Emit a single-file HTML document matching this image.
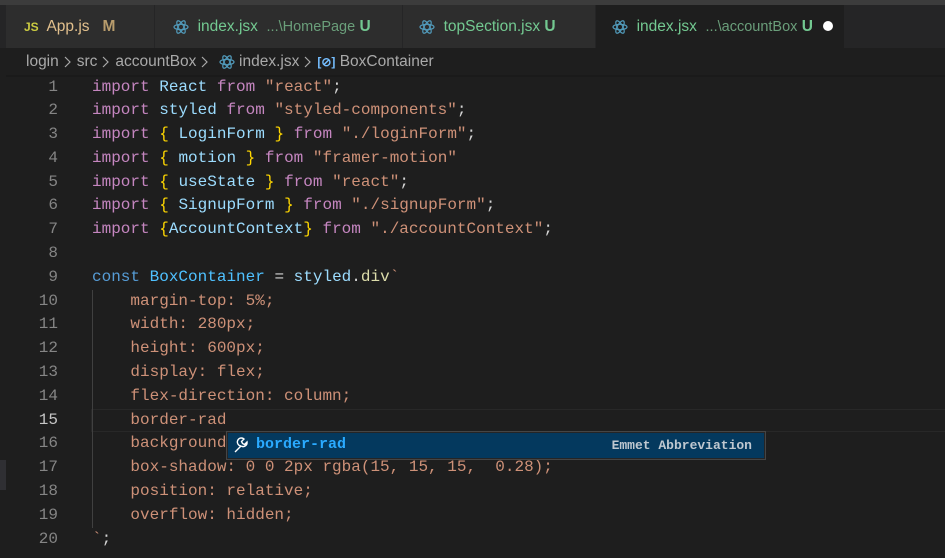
<!DOCTYPE html><html><head><style>
html,body{margin:0;width:945px;height:558px;overflow:hidden}
body{background:#1e1e1e;position:relative;font-family:"Liberation Sans",sans-serif}
.top{position:absolute;left:0;top:0;width:945px;height:5px;background:#3c3c3c}
.bar{position:absolute;left:0;top:5px;width:945px;height:43px;background:#252526}
.tab{position:absolute;top:5px;height:43px;background:#2d2d2d;border-right:1px solid #252526;box-sizing:border-box;font-size:15.5px;line-height:43px;white-space:nowrap;color:#73c991}
.tab .d{color:#6a9e7a;font-size:14.5px}
.crumb{position:absolute;top:48px;left:0;width:945px;height:28px;font-size:15.5px;color:#a9a9a9;line-height:28px;padding-left:26px;box-sizing:border-box;white-space:nowrap}
.code{position:absolute;top:75.5px;left:0;font-family:"Liberation Mono",monospace;font-size:16px;line-height:23.8px;white-space:pre;color:#d4d4d4}
.ln{position:absolute;left:0;top:0;width:58px;text-align:right;color:#858585}
.tx{position:absolute;left:92px;top:0}
.k{color:#c586c0}.v{color:#9cdcfe}.s{color:#ce9178}.b{color:#ffd700}.c{color:#569cd6}.t{color:#4fc1ff}.f{color:#dcdcaa}
svg{vertical-align:middle}
.ch{display:inline-block;margin:0 5px}
</style></head><body>
<div class="top"></div><div class="bar"></div>
<div style="position:absolute;left:0;top:5px;width:6px;height:43px;background:#252526"></div>
<div class="tab" style="left:6px;width:149px;padding-left:18px"><b style="color:#cbcb41;font-size:12px">JS</b>&nbsp; <span style="color:#e2c08d">App.js</span>&nbsp;&nbsp;&nbsp;<b style="color:#b89c6c">M</b></div>
<div class="tab" style="left:155px;width:248px;padding-left:18px"><svg width="16" height="16" viewBox="0 0 16 16"><g fill="none" stroke="#519aba" stroke-width="1.2"><ellipse cx="8" cy="8" rx="7" ry="2.7"/><ellipse cx="8" cy="8" rx="7" ry="2.7" transform="rotate(60 8 8)"/><ellipse cx="8" cy="8" rx="7" ry="2.7" transform="rotate(-60 8 8)"/></g></svg>&nbsp; index.jsx &nbsp;<span class="d">...\HomePage</span> <b>U</b></div>
<div class="tab" style="left:403px;width:193px;padding-left:16px"><svg width="16" height="16" viewBox="0 0 16 16"><g fill="none" stroke="#519aba" stroke-width="1.2"><ellipse cx="8" cy="8" rx="7" ry="2.7"/><ellipse cx="8" cy="8" rx="7" ry="2.7" transform="rotate(60 8 8)"/><ellipse cx="8" cy="8" rx="7" ry="2.7" transform="rotate(-60 8 8)"/></g></svg>&nbsp; topSection.jsx <b>U</b></div>
<div class="tab" style="left:596px;width:249px;background:#1e1e1e;padding-left:16px"><svg width="16" height="16" viewBox="0 0 16 16"><g fill="none" stroke="#519aba" stroke-width="1.2"><ellipse cx="8" cy="8" rx="7" ry="2.7"/><ellipse cx="8" cy="8" rx="7" ry="2.7" transform="rotate(60 8 8)"/><ellipse cx="8" cy="8" rx="7" ry="2.7" transform="rotate(-60 8 8)"/></g></svg>&nbsp; index.jsx &nbsp;<span class="d">...\accountBox</span> <b>U</b><span style="position:absolute;left:227px;top:16px;width:10px;height:10px;border-radius:50%;background:#fff"></span></div>
<div class="crumb">login<svg class="ch" width="8" height="12" viewBox="0 0 8 12"><path d="M1 1 L6 6 L1 11" fill="none" stroke="#a9a9a9" stroke-width="1.2"/></svg>src<svg class="ch" width="8" height="12" viewBox="0 0 8 12"><path d="M1 1 L6 6 L1 11" fill="none" stroke="#a9a9a9" stroke-width="1.2"/></svg>accountBox<svg class="ch" width="8" height="12" viewBox="0 0 8 12"><path d="M1 1 L6 6 L1 11" fill="none" stroke="#a9a9a9" stroke-width="1.2"/></svg> <svg width="16" height="16" viewBox="0 0 16 16"><g fill="none" stroke="#519aba" stroke-width="1.2"><ellipse cx="8" cy="8" rx="7" ry="2.7"/><ellipse cx="8" cy="8" rx="7" ry="2.7" transform="rotate(60 8 8)"/><ellipse cx="8" cy="8" rx="7" ry="2.7" transform="rotate(-60 8 8)"/></g></svg> index.jsx<svg class="ch" width="8" height="12" viewBox="0 0 8 12"><path d="M1 1 L6 6 L1 11" fill="none" stroke="#a9a9a9" stroke-width="1.2"/></svg><b style="color:#75beff;font-size:12px">[&#8856;]</b> BoxContainer</div>
<div style="position:absolute;left:0;top:460px;width:6px;height:30px;background:#2f2f33"></div>
<div style="position:absolute;left:6px;top:75px;width:939px;height:2px;background:#1a1a1a"></div>
<div style="position:absolute;left:91px;top:409px;width:854px;height:21px;border:1px solid #282828;border-right:none"></div>
<div style="position:absolute;left:92px;top:290px;width:1px;height:238px;background:#404040"></div>
<div class="code"><div class="ln">1
2
3
4
5
6
7
8
9
10
11
12
13
14
<span style="color:#c6c6c6">15</span>
16
17
18
19
20</div><div class="tx"><span class="k">import</span> <span class="v">React</span> <span class="k">from</span> <span class="s">"react"</span>;
<span class="k">import</span> <span class="v">styled</span> <span class="k">from</span> <span class="s">"styled-components"</span>;
<span class="k">import</span> <span class="b">{</span> <span class="v">LoginForm</span> <span class="b">}</span> <span class="k">from</span> <span class="s">"./loginForm"</span>;
<span class="k">import</span> <span class="b">{</span> <span class="v">motion</span> <span class="b">}</span> <span class="k">from</span> <span class="s">"framer-motion"</span>
<span class="k">import</span> <span class="b">{</span> <span class="v">useState</span> <span class="b">}</span> <span class="k">from</span> <span class="s">"react"</span>;
<span class="k">import</span> <span class="b">{</span> <span class="v">SignupForm</span> <span class="b">}</span> <span class="k">from</span> <span class="s">"./signupForm"</span>;
<span class="k">import</span> <span class="b">{</span><span class="v">AccountContext</span><span class="b">}</span> <span class="k">from</span> <span class="s">"./accountContext"</span>;

<span class="c">const</span> <span class="t">BoxContainer</span> = <span class="v">styled</span>.<span class="f">div</span><span class="s">`</span>
<span class="s">    margin-top: 5%;
    width: 280px;
    height: 600px;
    display: flex;
    flex-direction: column;
    border-rad
    background
    box-shadow: 0 0 2px rgba(15, 15, 15,  0.28);
    position: relative;
    overflow: hidden;
`</span>;</div></div>
<div style="position:absolute;left:226px;top:431px;width:540px;height:29px;background:#252526;border:1px solid #454545;box-sizing:border-box">
<div style="position:absolute;left:1px;top:1px;right:1px;bottom:1px;background:#04395e"></div>
<svg style="position:absolute;left:5px;top:5px" width="18" height="18" viewBox="0 0 18 18"><path d="M3 15 L9 9 M9 9 a4 4 0 1 1 3 -7 l-2.5 2.5 1 2 2 1 2.5 -2.5 a4 4 0 0 1 -6 4" fill="none" stroke="#fff" stroke-width="1.4"/></svg>
<span style="position:absolute;left:29px;top:4px;font-family:'Liberation Mono',monospace;font-size:15px;font-weight:bold;color:#2aaaff">border-rad</span>
<span style="position:absolute;right:13px;top:6px;font-family:'Liberation Mono',monospace;font-size:13px;font-weight:bold;color:#bfc8d0">Emmet Abbreviation</span>
</div>
</body></html>
